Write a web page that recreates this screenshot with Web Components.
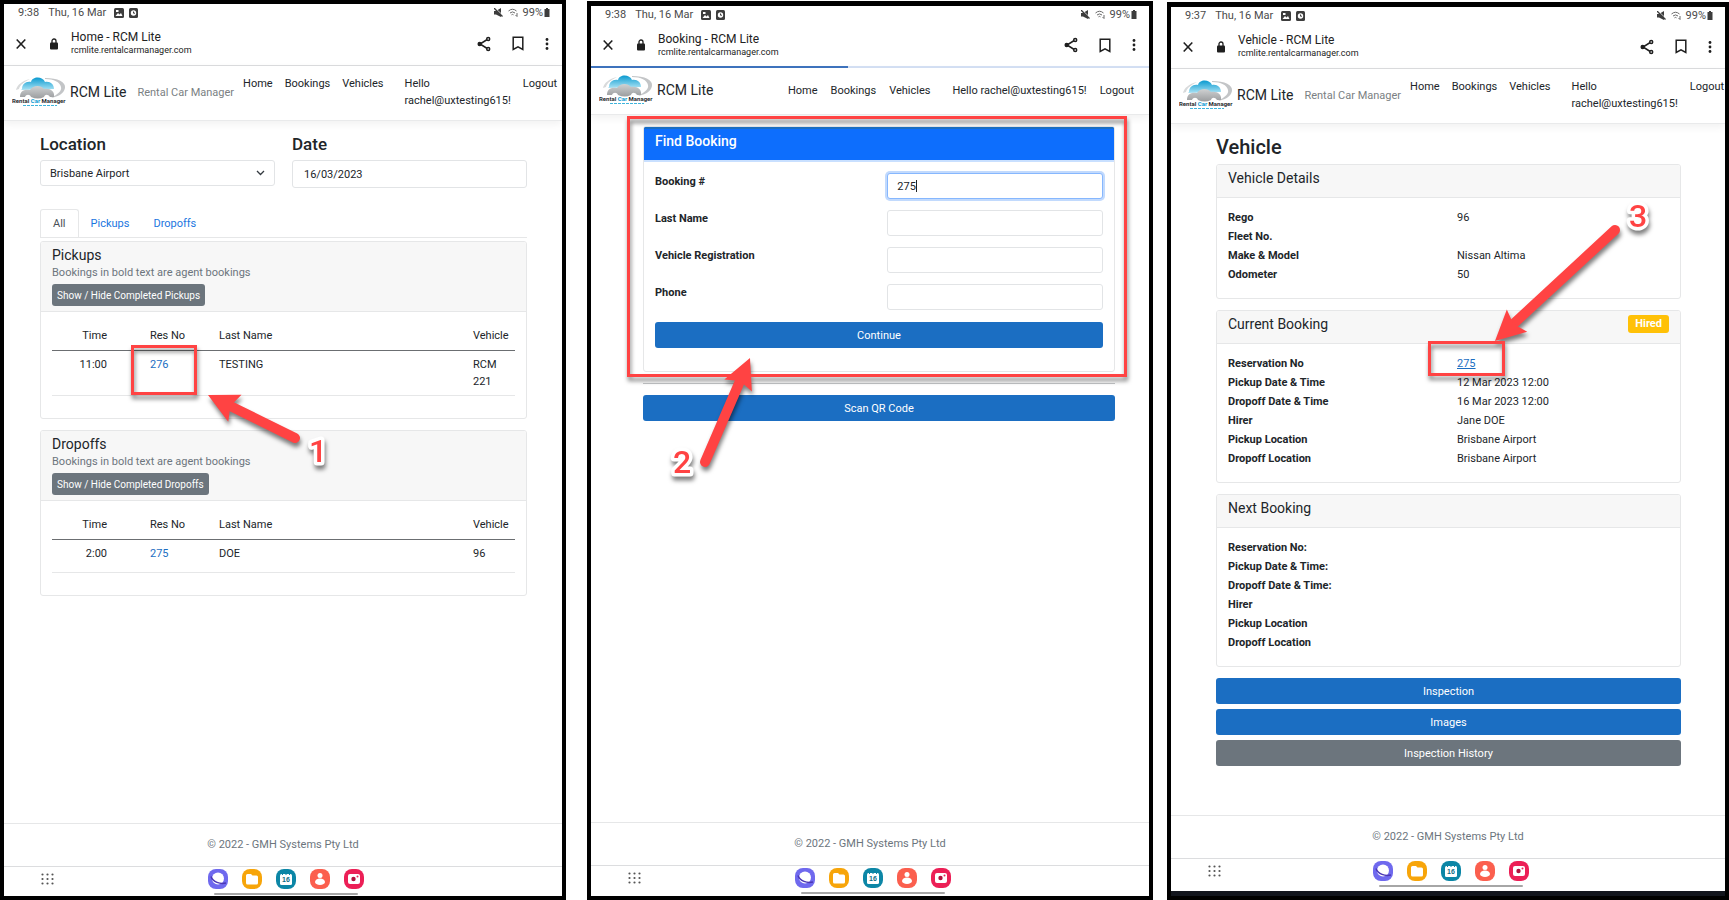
<!DOCTYPE html>
<html lang="en">
<head>
<meta charset="utf-8">
<meta name="viewport" content="width=device-width, initial-scale=1">
<title>RCM Lite walkthrough</title>
<style>
  body {
    margin: 0;
    background: #fff;
    font-family: Roboto, "Liberation Sans", sans-serif;
    font-size: 11px;
    line-height: 17px;
    color: #212529;
  }
  main {
    display: grid;
    grid-template-columns: minmax(0, 566fr) 21px minmax(0, 566fr) 14px minmax(0, 562fr);
    min-height: 100vh;
    overflow: hidden;
  }
  main > :nth-child(1) { grid-column: 1; }
  main > :nth-child(2) { grid-column: 3; --top: 1px; --bezel-top: 5px; --task: 31px; }
  main > :nth-child(3) { grid-column: 5; --top: 2px; --bezel-top: 5px; --task: 33px; --strip: 5px; }
</style>
</head>
<body>
<main>
  <tablet-screen time="9:38" heading="Home - RCM Lite" tagline>
    <home-page></home-page>
    <step-marker slot="marker" n="1" box="131 345 66 50" tip="208 395" tail="295 438" label="318 462"></step-marker>
  </tablet-screen>
  <tablet-screen time="9:38" heading="Booking - RCM Lite" loading>
    <booking-page></booking-page>
    <step-marker slot="marker" n="2" box="40 115 500 261" tip="163 357" tail="118 461" label="95 472"></step-marker>
  </tablet-screen>
  <tablet-screen time="9:37" heading="Vehicle - RCM Lite" tagline>
    <vehicle-page></vehicle-page>
    <step-marker slot="marker" n="3" box="261 339 77 35" tip="328 339" tail="448 228" label="471 225"></step-marker>
  </tablet-screen>
</main>

<script>
/* The setup function fills a fresh copy of the template before it is attached */
const define = (name, html, setup) => {
  const template = document.createElement('template');
  template.innerHTML = html;
  customElements.define(name, class extends HTMLElement {
    connectedCallback() {
      if (this.shadowRoot) return;
      const copy = template.content.cloneNode(true);
      if (setup) setup(this, copy);
      this.attachShadow({ mode: 'open' }).append(copy);
    }
  });
};

/* Shared look of action buttons */
define('action-button', `
  <style>
    :host { display: block; }
    button {
      display: block; width: 100%; height: 26px; padding: 0; border: 0; border-radius: 3px;
      background: #1b6ec2; color: #fff; font: inherit; text-align: center;
    }
    :host([secondary]) button { background: #6c757d; }
    :host([small]) button { width: auto; height: 22px; padding: 0 5px; font-size: 10px; }
  </style>
  <button type="button"><slot></slot></button>`);

define('info-card', `
  <style>
    :host { display: block; border: 1px solid #e6e7e8; border-radius: 3px; background: #fff; overflow: hidden; }
    header {
      display: flex; justify-content: space-between; align-items: flex-start;
      padding: 4px 11px 0; min-height: 28px; background: #f7f7f7; border-bottom: 1px solid #e6e7e8;
    }
    h2 { margin: 0; font-size: 14px; font-weight: 400; line-height: 18px; }
    :host([primary]) header { padding-top: 3px; background: #0d6efd; border-top: 2px solid #1b6ec2; border-bottom: 2px solid #c9e0ff; color: #fff; }
    :host([primary]) h2 { font-weight: 500; }
    .body { padding: 0 11px; }
  </style>
  <header>
    <div><h2></h2><slot name="lead"></slot></div>
    <slot name="badge"></slot>
  </header>
  <div class="body"><slot></slot></div>`,
  (host, root) => { root.querySelector('h2').textContent = host.getAttribute('heading'); });

define('brand-logo', `
  <style>:host { display: block; } svg { display: block; }</style>
  <svg width="56" height="30" viewBox="0 0 56 30" role="img" aria-label="Rental Car Manager">
    <defs>
      <linearGradient id="b" x1="0" y1="0" x2="0" y2="1"><stop offset="0" stop-color="#0a9ad0"/><stop offset="1" stop-color="#a9e2f4"/></linearGradient>
      <linearGradient id="g" x1="0" y1="0" x2="0" y2="1"><stop offset="0" stop-color="#cfd1d2"/><stop offset="1" stop-color="#9b9d9f"/></linearGradient>
    </defs>
    <path d="M33 1 C46 1 54 5 53 11 C52 17 45 20 39 21 C46 17 50 14 49 10 C48 5 42 2 33 2 Z" fill="#c3c5c7"/>
    <path d="M4 13 C5 8 10 4 18 2 C12 5 8 8 7 12 Z" fill="#d8dadb"/>
    <path d="M10 12 C10 7 14 4 19 5 C20 -1 31 -1 33 5 C38 4 42 7 42 12 L9 13 Z" fill="url(#b)"/>
    <path d="M8 20 C8 14 12 12 18 13 C21 8 29 8 32 12 C38 11 43 14 42 20 L38 20 C36 17 33 17 32 20 Q26 23 19 20 C18 17 14 17 13 20 Z" fill="url(#g)"/>
    <text x="0" y="26" font-size="6" font-weight="700" fill="#2a2d30">Rental <tspan fill="#0a9ad0">Car</tspan> Manager</text>
    <path d="M11 28.500H45" stroke="#3fb4dc" stroke-width="1" stroke-dasharray="3 1"/>
  </svg>`);

define('site-nav', `
  <style>
    :host { display: block; overflow: hidden; border-bottom: 1px solid #e9eaeb; box-shadow: 0 3px 8px rgba(0,0,0,.06); }
    nav { display: flex; align-items: center; box-sizing: border-box; height: 46px; padding: 0 15px 2px 8px; white-space: nowrap; }
    brand-logo { flex: none; margin-right: 2px; }
    .brand { flex: none; font-size: 14px; }
    .tagline { display: none; color: #7b7f83; margin-left: 11px; }
    a { color: inherit; text-decoration: none; }
    ul { display: flex; flex: none; gap: 13px; list-style: none; margin: 0 0 0 auto; padding: 0; }
    .hello { margin-left: 9px; }
    :host([tagline]) nav { height: 54px; padding-right: 0; }
    :host([tagline]) ul { gap: 12px; margin-left: 9px; }
    :host([tagline]) .tagline { display: block; flex: none; }
    :host([tagline]) .hello { white-space: pre-line; }
  </style>
  <nav>
    <brand-logo></brand-logo>
    <a class="brand" href="#home">RCM Lite</a>
    <span class="tagline">Rental Car Manager</span>
    <ul>
      <li><a href="#home">Home</a></li>
      <li><a href="#bookings">Bookings</a></li>
      <li><a href="#vehicles">Vehicles</a></li>
      <li class="hello"><a href="#account"></a></li>
      <li><a href="#logout">Logout</a></li>
    </ul>
  </nav>`,
  (host, root) => {
    root.querySelector('.hello a').textContent =
      host.hasAttribute('tagline') ? 'Hello\nrachel@uxtesting615!' : 'Hello rachel@uxtesting615!';
  });

define('status-bar', `
  <style>
    :host { display: flex; align-items: center; height: 17px; padding: 0 12px 0 14px; color: #4b4b4b; white-space: nowrap; }
    .date { margin: 0 8px 0 9px; }
    svg { display: block; }
    .glyphs { display: flex; gap: 5px; margin-right: auto; }
    .right { display: flex; align-items: center; gap: 5px; }
    .power { display: flex; align-items: center; gap: 1px; }
  </style>
  <span class="time"></span><span class="date">Thu, 16 Mar</span>
  <span class="glyphs">
    <svg width="10" height="10" viewBox="0 0 10 10"><rect width="10" height="10" rx="1.500" fill="#3d3d3d"/><path d="M1.500 8 L4 5 L5.500 6.500 L7 5 L8.500 8 Z M2 2 h2.500 v2 H2Z" fill="#fff"/></svg>
    <svg width="9" height="10" viewBox="0 0 9 10"><rect width="9" height="10" rx="1.500" fill="#3d3d3d"/><circle cx="4.500" cy="5" r="2.700" fill="#fff"/><path d="M4.500 3.500V5.200H6" stroke="#3d3d3d" fill="none"/></svg>
  </span>
  <span class="right">
    <svg width="9" height="9" viewBox="0 0 9 9"><path d="M0 3 H2 L7 0 V9 L2 6.500 H0Z" fill="#3d3d3d"/><path d="M1 0 L9 7.500" stroke="#fff" stroke-width="1"/><path d="M0 0 L8.500 8.500" stroke="#3d3d3d" stroke-width="1.300"/></svg>
    <svg width="10" height="9" viewBox="0 0 10 9" fill="none" stroke="#6a6a6a"><path d="M.5 3 Q4.500 -.5 8.500 3 M2 5 Q4.500 2.800 7 5 M3.500 6.800 Q4.500 6 5.500 6.800"/><path d="M9 5V8.500 M7.500 7L9 8.500"/></svg>
    <span class="power">99%<svg width="6" height="9" viewBox="0 0 6 9"><path d="M2 0H4V1H5.500V9H.5V1H2Z" fill="#3d3d3d"/></svg></span>
  </span>`,
  (host, root) => { root.querySelector('.time').textContent = host.getAttribute('time'); });

define('browser-bar', `
  <style>
    :host { display: flex; align-items: center; box-sizing: border-box; height: 45px; padding: 1px 13px 0 12px; border-bottom: 1px solid #dcdddf; color: #222; }
    button { display: block; padding: 0; border: 0; background: none; }
    svg { display: block; }
    .lock { margin: 0 13px 0 24px; }
    .page { margin-right: auto; }
    .title { font-size: 12px; line-height: 14px; }
    .url { font-size: 9px; line-height: 13px; }
    .tools { display: flex; align-items: center; gap: 21px; }
    :host([loading]) { border-bottom: 2px solid; border-image: linear-gradient(90deg, #3f74bf 46%, #d5e1f5 46%) 1; }
  </style>
  <button type="button" aria-label="Close"><svg width="10" height="12" viewBox="0 0 10 12"><path d="M.7 1.500L9.300 10.500M9.300 1.500L.7 10.500" stroke="#1f1f1f" stroke-width="1.600"/></svg></button>
  <svg class="lock" width="8" height="12" viewBox="0 0 8 12"><rect y="4.500" width="8" height="7" rx="1" fill="#1f1f1f"/><path d="M2 5V3a2 2 0 0 1 4 0V5" fill="none" stroke="#1f1f1f" stroke-width="1.300"/></svg>
  <div class="page"><div class="title"></div><div class="url">rcmlite.rentalcarmanager.com</div></div>
  <div class="tools">
    <button type="button" aria-label="Share"><svg width="14" height="16" viewBox="0 0 14 16" fill="#fff" stroke="#1f1f1f" stroke-width="1.500"><path d="M11 3L3 8L11 13"/><circle cx="11.200" cy="3" r="1.500"/><circle cx="2.700" cy="8" r="1.500" fill="#1f1f1f"/><circle cx="11.200" cy="13" r="1.500"/></svg></button>
    <button type="button" aria-label="Bookmark"><svg width="12" height="15" viewBox="0 0 12 15"><path d="M1.200 1.200H10.800V13.500L6 10.800L1.200 13.500Z" fill="none" stroke="#1f1f1f" stroke-width="1.500"/></svg></button>
    <button type="button" aria-label="More"><svg width="4" height="14" viewBox="0 0 4 14" fill="#1f1f1f"><circle cx="2" cy="2.500" r="1.400"/><circle cx="2" cy="7" r="1.400"/><circle cx="2" cy="11.500" r="1.400"/></svg></button>
  </div>`,
  (host, root) => { root.querySelector('.title').textContent = host.getAttribute('heading'); });

define('task-bar', `
  <style>
    :host { display: grid; grid-template-columns: 1fr auto 1fr; height: var(--task, 30px); box-sizing: border-box; border-top: 1px solid #dcdddf; background: #fff; }
    .grid { margin: 6px 0 0 37px; justify-self: start; align-self: start; }
    .dock { display: flex; flex-direction: column; align-items: center; gap: 4px; padding: 2px 0 0 6px; align-self: start; }
    .apps { display: flex; gap: 14px; }
    button { display: block; padding: 0; border: 0; background: none; }
    svg { display: block; font-weight: 700; }
    .handle { width: 144px; height: 2px; border-radius: 1px; background: #a6a6a6; }
  </style>
  <button class="grid" type="button" aria-label="All apps"><svg width="13" height="12" viewBox="0 0 13 12" stroke="#555" stroke-width="2.200" stroke-linecap="round" stroke-dasharray="0 5"><path d="M1.500 1.500H12M1.500 6H12M1.500 10.500H12"/></svg></button>
  <div class="dock">
    <div class="apps">
      <button type="button" aria-label="Internet"><svg width="20" height="20" viewBox="0 0 20 20"><rect width="20" height="20" rx="8" fill="#6f69ee"/><circle cx="10" cy="9.500" r="6" fill="#fff"/><path d="M3 7.500C5 13 12 15.500 18 14" fill="none" stroke="#4a36b5" stroke-width="1.500"/></svg></button>
      <button type="button" aria-label="Files"><svg width="20" height="20" viewBox="0 0 20 20"><rect width="20" height="20" rx="8" fill="#f7a50a"/><path d="M4 6.500a1.500 1.500 0 0 1 1.500-1.500H9L10.500 6.500H14.500A1.500 1.500 0 0 1 16 8V14a1.500 1.500 0 0 1-1.500 1.500H5.500A1.500 1.500 0 0 1 4 14Z" fill="#fff"/></svg></button>
      <button type="button" aria-label="Calendar"><svg width="20" height="20" viewBox="0 0 20 20"><rect width="20" height="20" rx="8" fill="#0c86a6"/><rect x="4" y="5" width="12" height="11" rx="1.500" fill="#fff"/><path d="M6.500 4.500V6M10 4.500V6M13.500 4.500V6" stroke="#0c86a6"/><text x="10" y="13" font-size="7" text-anchor="middle" fill="#0c6d87">16</text></svg></button>
      <button type="button" aria-label="Contacts"><svg width="20" height="20" viewBox="0 0 20 20"><rect width="20" height="20" rx="8" fill="#fb5f4e"/><circle cx="10" cy="6.500" r="2.500" fill="#fff"/><path d="M5 13a5 3.500 0 0 1 10 0a5 3 0 0 1-10 0Z" fill="#fff"/></svg></button>
      <button type="button" aria-label="Camera"><svg width="20" height="20" viewBox="0 0 20 20"><rect width="20" height="20" rx="8" fill="#ec1f56"/><rect x="4" y="5" width="12" height="10" rx="2" fill="#fff"/><circle cx="9.500" cy="10" r="2.200" fill="#b0103c"/><circle cx="13.500" cy="7.500" r="1" fill="#ec1f56"/></svg></button>
    </div>
    <div class="handle"></div>
  </div>
  <span></span>`);

/* A tablet with its system bars, the site's navigation and footer round the page */
define('tablet-screen', `
  <style>
    :host {
      display: flex; flex-direction: column; position: relative; box-sizing: border-box; min-width: 0;
      margin-top: var(--top, 0px);
      border: 4px solid #000; border-top-width: var(--bezel-top, 4px); background: #fff;
    }
    .content { flex: 1; }
    footer { flex: none; border-top: 1px solid #e6e7e8; height: 42px; line-height: 42px; text-align: center; color: #6c757d; }
    .strip { height: var(--strip, 0px); background: #12151d; }
  </style>
  <status-bar></status-bar>
  <browser-bar></browser-bar>
  <site-nav></site-nav>
  <div class="content"><slot></slot></div>
  <footer>© 2022 - GMH Systems Pty Ltd</footer>
  <task-bar></task-bar>
  <div class="strip"></div>
  <slot name="marker"></slot>`,
  (host, root) => {
    root.querySelector('status-bar').setAttribute('time', host.getAttribute('time'));
    const bar = root.querySelector('browser-bar');
    bar.setAttribute('heading', host.getAttribute('heading'));
    bar.toggleAttribute('loading', host.hasAttribute('loading'));
    root.querySelector('site-nav').toggleAttribute('tagline', host.hasAttribute('tagline'));
  });

/* Numbered callout: a red frame, an arrow to it and the step's number */
define('step-marker', `
  <style>
    :host { position: absolute; inset: calc(-1 * var(--bezel-top, 4px)) 0 0 -4px; pointer-events: none; }
    svg { display: block; width: 100%; height: 100%; overflow: visible; filter: drop-shadow(1px 4px 2px rgba(0,0,0,.5)); }
    text { font: 500 32px Roboto, sans-serif; fill: #ff4343; stroke: #fff; stroke-width: 7px; stroke-linejoin: round; paint-order: stroke; text-anchor: middle; }
  </style>
  <svg>
    <rect fill="none" stroke="#ff4343" stroke-width="3"/>
    <line stroke="#ff4343" stroke-width="10" stroke-linecap="round"/>
    <path fill="#ff4343"/>
    <text></text>
  </svg>`,
  (host, root) => {
    const nums = name => host.getAttribute(name).split(' ').map(Number);
    const set = (sel, attrs) => {
      for (const key in attrs) root.querySelector(sel).setAttribute(key, attrs[key]);
    };
    const [x, y, w, h] = nums('box'), [tx, ty] = nums('tip'), [ex, ey] = nums('tail'), [lx, ly] = nums('label');
    set('rect', { x: x + 1.5, y: y + 1.5, width: w - 3, height: h - 3 });
    const len = Math.hypot(ex - tx, ey - ty), ux = (ex - tx) / len, uy = (ey - ty) / len;
    const bx = tx + ux * 30, by = ty + uy * 30, half = 15;
    set('line', { x1: tx + ux * 24, y1: ty + uy * 24, x2: ex, y2: ey });
    set('path', { d: `M${tx} ${ty}L${bx - uy * half} ${by + ux * half}L${tx + ux * 25} ${ty + uy * 25}L${bx + uy * half} ${by - ux * half}Z` });
    set('text', { x: lx, y: ly });
    root.querySelector('text').textContent = host.getAttribute('n');
  });

define('booking-list', `
  <style>
    :host { display: block; }
    p { margin: 0 0 3px; color: #6c757d; }
    action-button { padding-bottom: 5px; }
    table { width: 100%; margin: 12px 0 22px; border-collapse: collapse; table-layout: fixed; }
    th, td { padding: 0; text-align: left; font-weight: 400; vertical-align: top; }
    th { height: 26px; line-height: 24px; border-bottom: 1px solid #6b6e71; }
    td { height: 22px; padding: 5px 0; border-bottom: 1px solid #e6e7e8; }
    th:nth-child(1) { width: 55px; }
    th:nth-child(2) { width: 69px; }
    th:nth-child(4) { width: 42px; }
    th:nth-child(1), td:nth-child(1) { text-align: right; }
    th:nth-child(2), td:nth-child(2) { padding-left: 43px; }
    .vehicle { display: block; width: 30px; }
    a { color: #1b6ec2; text-decoration: none; }
  </style>
  <info-card>
    <div slot="lead"><p>Bookings in bold text are agent bookings</p><action-button secondary small></action-button></div>
    <table>
      <thead><tr><th>Time</th><th>Res No</th><th>Last Name</th><th>Vehicle</th></tr></thead>
      <tbody><tr><td class="time"></td><td><a href="#booking"></a></td><td class="name"></td><td><span class="vehicle"></span></td></tr></tbody>
    </table>
  </info-card>`,
  (host, root) => {
    const get = name => host.getAttribute(name);
    root.querySelector('info-card').setAttribute('heading', get('kind'));
    root.querySelector('action-button').textContent = 'Show / Hide Completed ' + get('kind');
    root.querySelector('.time').textContent = get('time');
    root.querySelector('a').textContent = get('res');
    root.querySelector('.name').textContent = get('name');
    root.querySelector('.vehicle').textContent = get('vehicle');
  });

define('home-page', `
  <style>
    :host { display: block; padding: 11px 35px 0 36px; }
    .filters { display: grid; grid-template-columns: 1fr 1fr; gap: 17px; align-items: start; }
    label { display: block; margin-bottom: 4px; font-size: 17px; font-weight: 500; line-height: 24px; }
    .pick { position: relative; }
    select, input { display: block; box-sizing: border-box; width: 100%; border: 1px solid #e2e4e6; border-radius: 3px; background: #fff; color: inherit; font: inherit; }
    select { height: 26px; padding: 0 9px; appearance: none; }
    input { height: 28px; padding: 0 11px; }
    .pick svg { position: absolute; right: 10px; bottom: 10px; }
    .tabs { display: flex; margin: 21px 0 3px; border-bottom: 1px solid #e6e7e8; }
    .tabs a { display: block; box-sizing: border-box; height: 28px; padding: 0 11px; line-height: 27px; color: #1b76e0; text-decoration: none; border: 1px solid transparent; border-bottom: 0; }
    .tabs .on { padding: 0 12px; color: #495057; border-color: #e6e7e8; border-radius: 3px 3px 0 0; background: #fff; margin-bottom: -1px; }
    booking-list + booking-list { margin-top: 11px; }
  </style>
  <div class="filters">
    <div class="pick"><label for="loc">Location</label><select id="loc"><option>Brisbane Airport</option></select>
      <svg width="9" height="6" viewBox="0 0 9 6"><path d="M1 1L4.500 4.500L8 1" fill="none" stroke="#343a40" stroke-width="1.300"/></svg></div>
    <div><label for="date">Date</label><input id="date" type="text" value="16/03/2023"></div>
  </div>
  <nav class="tabs"><a class="on" href="#all">All</a><a href="#pickups">Pickups</a><a href="#dropoffs">Dropoffs</a></nav>
  <booking-list kind="Pickups" time="11:00" res="276" name="TESTING" vehicle="RCM 221"></booking-list>
  <booking-list kind="Dropoffs" time="2:00" res="275" name="DOE" vehicle="96"></booking-list>`);

define('booking-page', `
  <style>
    :host { display: block; padding: 11px 34px 0 52px; }
    form { display: grid; grid-template-columns: 14fr 13fr; row-gap: 11px; padding: 11px 0 23px; }
    label { font-weight: 700; }
    .field { position: relative; }
    input { display: block; box-sizing: border-box; width: 100%; height: 26px; padding: 0 9px; border: 1px solid #e2e4e6; border-radius: 3px; background: #fff; color: inherit; font: inherit; outline: none; }
    .active input { border-color: #86b7fe; box-shadow: 0 0 0 2px #c2dafd; }
    .active::after { content: ""; position: absolute; left: 29px; top: 7px; width: 1px; height: 12px; background: #222; }
    form action-button { grid-column: 1 / -1; margin-top: 1px; }
    hr { margin: 11px 0; border: 0; border-top: 1px solid #c4c6c8; }
  </style>
  <info-card primary heading="Find Booking">
    <form>
      <label for="num">Booking #</label><div class="field active"><input id="num" type="text" value="275"></div>
      <label for="last">Last Name</label><div class="field"><input id="last" type="text"></div>
      <label for="reg">Vehicle Registration</label><div class="field"><input id="reg" type="text"></div>
      <label for="tel">Phone</label><div class="field"><input id="tel" type="tel"></div>
      <action-button>Continue</action-button>
    </form>
  </info-card>
  <hr>
  <action-button>Scan QR Code</action-button>`);

define('vehicle-page', `
  <style>
    :host { display: block; padding: 11px 44px 0 45px; }
    h1 { margin: 0 0 5px; font-size: 20px; font-weight: 500; line-height: 24px; }
    info-card { margin-bottom: 11px; }
    dl { display: grid; grid-template-columns: 1fr 212px; grid-auto-rows: 19px; line-height: 19px; margin: 0; padding: 10px 0 14px; }
    dt { font-weight: 700; }
    dd { margin: 0; }
    a { color: #1b6ec2; }
    .badge { padding: 0 7px; border-radius: 3px; background: #ffc107; color: #fff; font-weight: 700; line-height: 18px; }
    action-button { margin-bottom: 5px; }
  </style>
  <h1>Vehicle</h1>
  <info-card heading="Vehicle Details">
    <dl><dt>Rego</dt><dd>96</dd><dt>Fleet No.</dt><dd></dd><dt>Make &amp; Model</dt><dd>Nissan Altima</dd><dt>Odometer</dt><dd>50</dd></dl>
  </info-card>
  <info-card heading="Current Booking">
    <span slot="badge" class="badge">Hired</span>
    <dl><dt>Reservation No</dt><dd><a href="#275">275</a></dd><dt>Pickup Date &amp; Time</dt><dd>12 Mar 2023 12:00</dd>
      <dt>Dropoff Date &amp; Time</dt><dd>16 Mar 2023 12:00</dd><dt>Hirer</dt><dd>Jane DOE</dd>
      <dt>Pickup Location</dt><dd>Brisbane Airport</dd><dt>Dropoff Location</dt><dd>Brisbane Airport</dd></dl>
  </info-card>
  <info-card heading="Next Booking">
    <dl><dt>Reservation No:</dt><dd></dd><dt>Pickup Date &amp; Time:</dt><dd></dd><dt>Dropoff Date &amp; Time:</dt><dd></dd>
      <dt>Hirer</dt><dd></dd><dt>Pickup Location</dt><dd></dd><dt>Dropoff Location</dt><dd></dd></dl>
  </info-card>
  <action-button>Inspection</action-button>
  <action-button>Images</action-button>
  <action-button secondary>Inspection History</action-button>`);
</script>
</body>
</html>
